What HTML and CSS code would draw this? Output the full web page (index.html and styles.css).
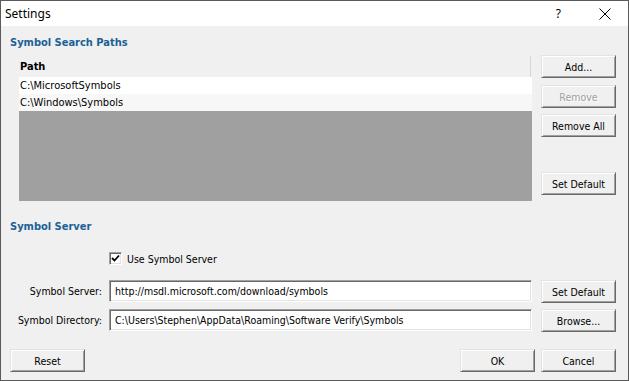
FILE: index.html
```html
<!DOCTYPE html>
<html>
<head>
<meta charset="utf-8">
<title>Settings</title>
<link rel="stylesheet" href="styles.css">
</head>
<body>
<div class="window">
  <div class="titlebar">
    <span class="title">Settings</span>
    <span class="help">?</span>
    <svg class="close" width="12" height="12" viewBox="0 0 12 12"><path d="M0.5 0.5 L11.5 11.5 M11.5 0.5 L0.5 11.5" stroke="#000" stroke-width="1" fill="none"/></svg>
  </div>
  <div class="client">
    <h2 class="section first">Symbol Search Paths</h2>
    <div class="paths">
      <div class="list">
        <div class="list-head"><span class="col">Path</span><span class="col-sep"></span></div>
        <div class="row">C:\MicrosoftSymbols</div>
        <div class="row alt">C:\Windows\Symbols</div>
        <div class="list-empty"></div>
      </div>
      <div class="side-buttons">
        <button class="btn b-add">Add...</button>
        <button class="btn b-remove disabled">Remove</button>
        <button class="btn b-removeall">Remove All</button>
        <button class="btn b-setdef">Set Default</button>
      </div>
    </div>
    <h2 class="section second">Symbol Server</h2>
    <div class="check">
      <span class="box"><svg width="9" height="9" viewBox="0 0 9 9"><path d="M1 4 L3.5 6.5 L8 1.5" stroke="#000" stroke-width="1.8" fill="none"/></svg></span>
      <span>Use Symbol Server</span>
    </div>
    <div class="field-row r1">
      <span class="label">Symbol Server:</span>
      <div class="input">http://msdl.microsoft.com/download/symbols</div>
      <button class="btn">Set Default</button>
    </div>
    <div class="field-row r2">
      <span class="label">Symbol Directory:</span>
      <div class="input">C:\Users\Stephen\AppData\Roaming\Software Verify\Symbols</div>
      <button class="btn">Browse...</button>
    </div>
    <div class="footer">
      <button class="btn">Reset</button>
      <span class="spacer"></span>
      <button class="btn">OK</button>
      <button class="btn b-cancel">Cancel</button>
    </div>
  </div>
</div>
</body>
</html>
```
FILE: styles.css
```css
html, body {
  margin: 0;
  padding: 0;
  background: #f0f0f0;
}
.window {
  width: 629px;
  height: 381px;
  box-sizing: border-box;
  border: 1px solid #5a5a5a;
  background: #f0f0f0;
  display: flex;
  flex-direction: column;
  font-family: "DejaVu Sans Condensed", "DejaVu Sans", sans-serif;
  font-size: 10.5px;
  color: #000;
}
.titlebar {
  height: 25px;
  background: #fff;
  display: flex;
  align-items: center;
  font-family: "Noto Sans", "Open Sans", sans-serif;
  font-size: 12px;
}
.title {
  margin-left: 4px;
  flex: 1;
}
.help {
  font-size: 12px;
  margin-right: 38px;
}
.close {
  margin-right: 17px;
  margin-top: 1px;
}
.client {
  flex: 1;
  display: flex;
  flex-direction: column;
  padding-left: 9px;
}
.section {
  margin: 0;
  font-size: 11px;
  font-weight: bold;
  color: #1a6196;
  line-height: 16px;
  height: 16px;
}
.section.first { margin-top: 9px; }
.section.second { margin-top: 18px; }
.paths {
  display: flex;
  margin-top: 4px;
  margin-left: 9px;
}
.list {
  width: 513px;
  display: flex;
  flex-direction: column;
}
.list-head {
  height: 22px;
  display: flex;
  align-items: center;
  font-weight: bold;
  font-size: 11px;
}
.list-head .col {
  flex: 1;
  padding-left: 1px;
  padding-top: 1px;
}
.col-sep {
  width: 1px;
  height: 21px;
  background: #d5d5d5;
  margin-right: 1px;
  align-self: flex-end;
}
.row {
  height: 17px;
  line-height: 17px;
  background: #fff;
  padding-left: 1px;
  font-size: 11px;
}
.row.alt { background: #f7f7f7; }
.list-empty {
  height: 90px;
  background: #a0a0a0;
}
.side-buttons {
  margin-left: 9px;
  display: flex;
  flex-direction: column;
}
.btn {
  width: 75px;
  height: 23px;
  box-sizing: border-box;
  margin: 0;
  padding: 0;
  font-family: inherit;
  font-size: 10.5px;
  color: #000;
  background: #f0f0f0;
  border: 1px solid;
  border-color: #e3e3e3 #696969 #696969 #e3e3e3;
  box-shadow: inset 1px 1px #fff, inset -1px -1px #a0a0a0;
  border-radius: 0;
}
.side-buttons .b-remove { margin-top: 7px; }
.side-buttons .b-removeall { margin-top: 6px; }
.side-buttons .b-setdef { margin-top: 35px; }
.btn.disabled {
  color: #a0a0a0;
  text-shadow: 1px 1px #fff;
}
.check {
  display: flex;
  align-items: center;
  margin-top: 17px;
  margin-left: 99px;
  height: 13px;
}
.box {
  width: 13px;
  height: 13px;
  box-sizing: border-box;
  border: 1px solid;
  border-color: #a0a0a0 #fff #fff #a0a0a0;
  box-shadow: inset 1px 1px #696969, inset -1px -1px #e3e3e3;
  background: #fff;
  display: flex;
  align-items: center;
  justify-content: center;
  margin-right: 5px;
}
.field-row {
  display: flex;
  align-items: flex-start;
  margin-left: -9px;
}
.field-row.r1 { margin-top: 15px; }
.field-row.r2 { margin-top: 6px; }
.label {
  width: 101px;
  text-align: right;
  line-height: 22px;
  margin-right: 7px;
}
.input {
  width: 423px;
  height: 22px;
  box-sizing: border-box;
  border: 1px solid;
  border-color: #a0a0a0 #fff #fff #a0a0a0;
  box-shadow: inset 1px 1px #696969, inset -1px -1px #e3e3e3;
  background: #fff;
  padding-left: 5px;
  line-height: 20px;
  margin-right: 9px;
  white-space: nowrap;
  overflow: hidden;
}
.footer {
  display: flex;
  margin-top: 17px;
  padding-right: 12px;
}
.spacer { flex: 1; }
.footer .b-cancel { margin-left: 6px; }
```
